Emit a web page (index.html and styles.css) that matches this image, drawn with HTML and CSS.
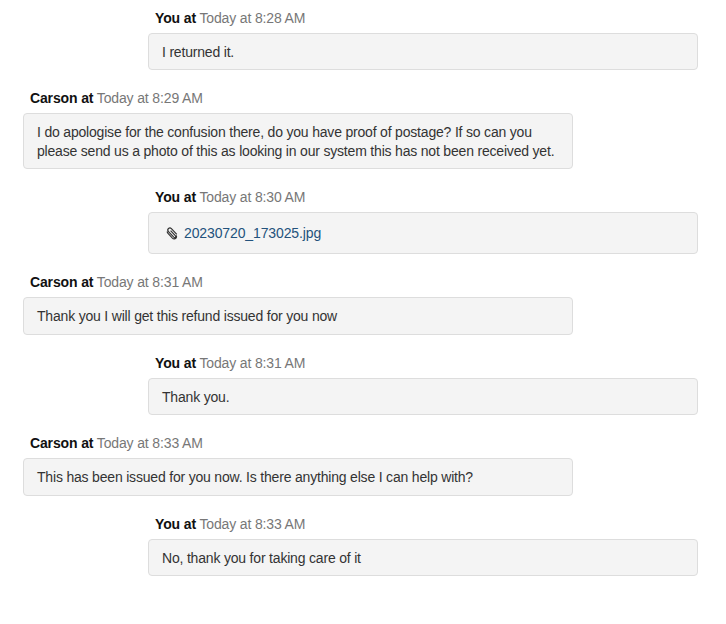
FILE: index.html
```html
<!DOCTYPE html>
<html lang="en">
<head>
  <meta charset="UTF-8" />
  <meta name="viewport" content="width=device-width, initial-scale=1.0" />
  <title>Chat</title>
  <link rel="stylesheet" href="styles.css">
</head>
<body>
  <div class="chat">
    <div class="msg you">
      <div class="head"><b>You at</b> Today at 8:28 AM</div>
      <div class="bubble">I returned it.</div>
    </div>

    <div class="msg agent">
      <div class="head"><b>Carson at</b> Today at 8:29 AM</div>
      <div class="bubble">I do apologise for the confusion there, do you have proof of postage? If so can you please send us a photo of this as looking in our system this has not been received yet.</div>
    </div>

    <div class="msg you">
      <div class="head"><b>You at</b> Today at 8:30 AM</div>
      <div class="bubble file">
        <svg class="clip" width="12" height="13" viewBox="0 0 12 13">
          <path d="M10.8 7.4 5.4 1.6C4.6.8 3.3.8 2.5 1.5 1.6 2.4 1.6 3.7 2.5 4.6l5.3 5.6c.5.5 1.2.5 1.6.1.4-.4.4-1.1-.1-1.6L4.6 3.7M1.2 4.6c0 .7.3 1.3.8 1.8l4.4 4.7c1 1 2.5 1.1 3.4.2.8-.8.9-2 .2-3" fill="none" stroke="#333" stroke-width="1.2"/>
        </svg>
        <a href="#">20230720_173025.jpg</a>
      </div>
    </div>

    <div class="msg agent">
      <div class="head"><b>Carson at</b> Today at 8:31 AM</div>
      <div class="bubble">Thank you I will get this refund issued for you now</div>
    </div>

    <div class="msg you">
      <div class="head"><b>You at</b> Today at 8:31 AM</div>
      <div class="bubble">Thank you.</div>
    </div>

    <div class="msg agent">
      <div class="head"><b>Carson at</b> Today at 8:33 AM</div>
      <div class="bubble">This has been issued for you now. Is there anything else I can help with?</div>
    </div>

    <div class="msg you">
      <div class="head"><b>You at</b> Today at 8:33 AM</div>
      <div class="bubble">No, thank you for taking care of it</div>
    </div>
  </div>
</body>
</html>
```

FILE: styles.css
```css
body {
  margin: 0;
  background: #fff;
  font-family: "Liberation Sans", Arial, sans-serif;
  font-size: 14px;
  letter-spacing: -0.19px;
  color: #333;
}
.chat {
  display: flex;
  flex-direction: column;
  gap: 18px;
  padding: 8px 28px 48px 23px;
}
.msg {
  width: 550px;
}
.you {
  align-self: flex-end;
}
.head {
  padding-left: 7px;
  height: 20px;
  line-height: 20px;
  margin-bottom: 5px;
  letter-spacing: -0.14px;
  color: #777;
}
.head b {
  color: #111;
}
.bubble {
  background: #f4f4f4;
  border: 1px solid #ddd;
  border-radius: 4px;
  padding: 9.05px 13px 7.75px;
  line-height: 18.6px;
}
.file {
  display: flex;
  align-items: center;
  gap: 6px;
  padding: 11px 17px 10px;
  line-height: 19px;
}
.file a {
  color: #23527c;
  letter-spacing: -0.12px;
  text-decoration: none;
}
.clip {
  flex: none;
}
```
